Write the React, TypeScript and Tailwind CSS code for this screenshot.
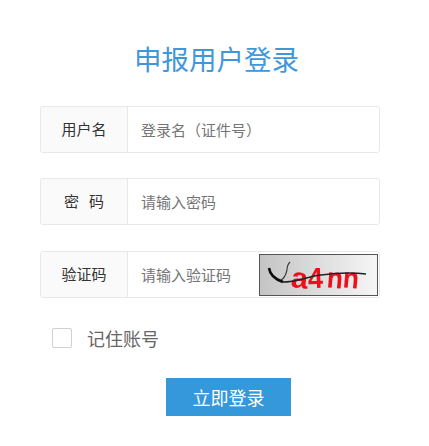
const captchaLetters = [
  { ch: "a", x: 32, w: 17, r: 6 },
  { ch: "4", x: 49, w: 15, r: -2 },
  { ch: "n", x: 68, w: 16, r: 5 },
  { ch: "n", x: 84, w: 16, r: 5 },
];

const Captcha = () => (
  <div className="h-[42px] w-[119px] shrink-0 overflow-hidden border border-[#555] bg-gradient-to-r from-[#c4c4c4] to-[#f6f6f6]">
    <svg width="117" height="40" viewBox="0 0 117 40">
      <defs>
        <filter id="soft">
          <feGaussianBlur stdDeviation="0.55" />
        </filter>
      </defs>
      <g filter="url(#soft)" transform="translate(-1 -1)">
        {captchaLetters.map((l, i) => (
          <text
            key={i}
            x={l.x}
            y="34"
            fill="#f0101a"
            fontSize="29"
            fontWeight="700"
            fontFamily="'Liberation Sans', sans-serif"
            textLength={l.w}
            lengthAdjust="spacingAndGlyphs"
            transform={`rotate(${l.r} ${l.x + 8} 26)`}
          >
            {l.ch}
          </text>
        ))}
        <path d="M22 26 C25 25 27 20 28 16 C28 13 29 10 31 8" fill="none" stroke="#333" strokeWidth="1.1" />
        <path d="M10 14 C11 21 15 25 24 28" fill="none" stroke="#111" strokeWidth="2.6" />
        <path d="M24 28 C38 28 46 23 62 21 C76 19 92 18 107 20" fill="none" stroke="#222" strokeWidth="1.5" />
      </g>
    </svg>
  </div>
);

const Row = ({ label, placeholder, className, children }: { label: string; placeholder: string; className?: string; children?: React.ReactNode }) => (
  <div className={`flex h-[47px] items-center rounded-[3px] border border-[#e8e8e8] bg-white ${className ?? ""}`}>
    <div className="flex h-full w-[87px] shrink-0 items-center justify-center whitespace-pre rounded-l-[3px] border-r border-[#e8e8e8] bg-[#fafafa] pb-[1px] text-[15px] text-[#333]">
      {label}
    </div>
    <input
      placeholder={placeholder}
      className="h-full min-w-0 flex-1 bg-transparent pl-[13px] text-[15px] outline-none placeholder:text-[#757575]"
    />
    {children}
  </div>
);

export default function App() {
  return (
    <div className="h-[446px] w-[429px] bg-white pl-[40px] pr-[49px] pt-[39px] font-['Microsoft_YaHei','Noto_Sans_CJK_SC',sans-serif]">
      <h1 className="pl-[13px] text-center text-[27.5px] leading-[38px] text-[#3f97db]">申报用户登录</h1>
      <div className="mt-[29px] flex flex-col gap-[25px]">
        <Row label="用户名" placeholder="登录名（证件号）" />
        <Row label={"密   码"} placeholder="请输入密码" />
        <Row label="验证码" placeholder="请输入验证码" className="mt-[1px]">
          <div className="mr-[1px]">
            <Captcha />
          </div>
        </Row>
      </div>
      <label className="ml-[12px] mt-[29px] flex items-center gap-[15px]">
        <span className="h-[20px] w-[20px] rounded-[2px] border border-[#d0d0d0] bg-white" />
        <span className="text-lg leading-[22px] text-[#666]">记住账号</span>
      </label>
      <div className="ml-[126px] mt-[29px]">
        <button className="h-[38px] w-[125px] bg-[#3498db] text-lg text-white">立即登录</button>
      </div>
    </div>
  );
}
